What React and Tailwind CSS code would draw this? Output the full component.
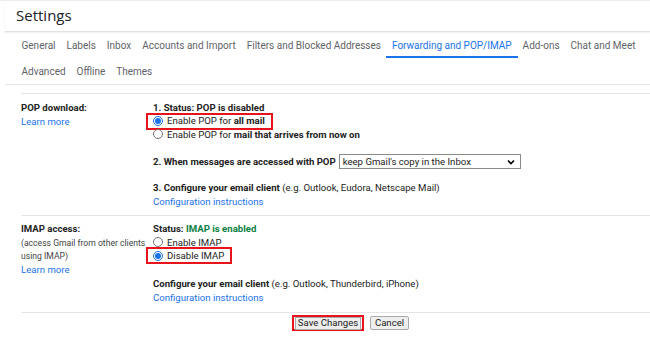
import React from "react";

const Radio = ({ checked }) => (
  <span
    className={
      "inline-flex items-center justify-center w-[10px] h-[10px] rounded-full border mr-[4px] shrink-0 " +
      (checked ? "border-[#1a73e8]" : "border-[#767676]")
    }
  >
    {checked && <span className="w-[6px] h-[6px] rounded-full bg-[#1a73e8]" />}
  </span>
);

export default function App() {
  const tabs1 = [
    "General",
    "Labels",
    "Inbox",
    "Accounts and Import",
    "Filters and Blocked Addresses",
    "Forwarding and POP/IMAP",
    "Add-ons",
    "Chat and Meet",
  ];
  const tabs2 = ["Advanced", "Offline", "Themes"];
  return (
    <div className="w-[650px] h-[345px] bg-white overflow-hidden text-[#222] font-['Roboto',sans-serif] text-[9.6px]">
      <div className="h-px bg-[#eee]" />
      <div className="h-[31px] flex items-center pl-[11px] ml-[5px] border-b border-[#e2e2e2] shadow-[0_1px_2px_rgba(0,0,0,0.08)]">
        <span className="text-[15px] leading-none text-[#202124] font-['Open_Sans',sans-serif] -mt-[2px]">Settings</span>
      </div>
      <div className="ml-[5px] border-b border-[#e5e5e5] font-['Roboto',sans-serif] text-[#5f6368] whitespace-nowrap">
        <div className="flex pl-[11px] h-[26px] items-stretch">
          {tabs1.map((t) => {
            const active = t === "Forwarding and POP/IMAP";
            return (
              <div
                key={t}
                className={
                  "flex items-center pt-[3px] border-b-2 " +
                  (active ? "text-[#1a73e8] border-[#1a73e8] px-[6px] mx-[-0.5px]" : "border-transparent px-[5.5px]")
                }
              >
                <span className="text-[10px]">{t}</span>
              </div>
            );
          })}
        </div>
        <div className="flex pl-[11px] h-[26px] items-center pt-[2px]">
          {tabs2.map((t) => (
            <div key={t} className="px-[5.5px]">
              <span className="text-[10px]">{t}</span>
            </div>
          ))}
        </div>
      </div>

      <div className="ml-[21px] mt-[8px]">
        <div className="border-t border-[#e6e6e6] flex pt-[7px] pb-[7px]">
          <div className="w-[132px] leading-[14px]">
            <div className="font-bold">POP download:</div>
            <div className="text-[#1a73e8]">Learn more</div>
          </div>
          <div className="leading-[13.5px]">
            <div className="font-bold">1. Status: POP is disabled</div>
            <div className="flex items-center">
              <div className="flex items-center border-2 border-[#e8141b] -ml-[7px] pl-[5px] pr-[6px] h-[17px] -my-[2px]">
                <Radio checked />
                <span>
                  Enable POP for <b>all mail</b>
                </span>
              </div>
            </div>
            <div className="flex items-center">
              <Radio />
              <span>
                Enable POP for <b>mail that arrives from now on</b>
              </span>
            </div>
            <div className="flex items-center mt-[13px]">
              <span className="font-bold mr-[3px]">2. When messages are accessed with POP</span>
              <div className="w-[182px] h-[15px] border border-[#8a8a8a] flex items-center justify-between pl-[3px] pr-[5px] text-[#222]">
                <span>keep Gmail's copy in the Inbox</span>
                <svg width="8" height="6" viewBox="0 0 8 6">
                  <path d="M1 1.5 L4 4.5 L7 1.5" fill="none" stroke="#000" strokeWidth="1.6" />
                </svg>
              </div>
            </div>
            <div className="mt-[12px]">
              <b>3. Configure your email client</b> (e.g. Outlook, Eudora, Netscape Mail)
            </div>
            <div className="text-[#1a73e8]">Configuration instructions</div>
          </div>
        </div>

        <div className="border-t border-[#e6e6e6] flex pt-[6px] pb-[8px]">
          <div className="w-[132px] leading-[14px]">
            <div className="font-bold">IMAP access:</div>
            <div className="text-[8.6px] text-[#444] leading-[13px] mt-[1px] whitespace-nowrap">(access Gmail from other clients</div>
            <div className="text-[8.6px] text-[#444] leading-[13px]">using IMAP)</div>
            <div className="text-[#1a73e8]">Learn more</div>
          </div>
          <div className="leading-[13.5px]">
            <div className="font-bold">
              Status: <span className="text-[#0b8043]">IMAP is enabled</span>
            </div>
            <div className="flex items-center">
              <Radio />
              <span>Enable IMAP</span>
            </div>
            <div className="flex items-center">
              <div className="flex items-center border-2 border-[#e8141b] -ml-[7px] pl-[5px] pr-[6px] h-[17px] -my-[2px]">
                <Radio checked />
                <span>Disable IMAP</span>
              </div>
            </div>
            <div className="mt-[15px]">
              <b>Configure your email client</b> (e.g. Outlook, Thunderbird, iPhone)
            </div>
            <div className="text-[#1a73e8]">Configuration instructions</div>
          </div>
        </div>

        <div className="border-t border-[#e6e6e6] flex pt-[2px] pl-[271px] gap-[6px]">
          <button className="border-2 border-[#e8141b] h-[16px] w-[72px] flex items-center justify-center">
            <span className="bg-[#efefef] border border-[#aaa] w-[66px] h-[13px] flex items-center justify-center text-[9.6px]">Save Changes</span>
          </button>
          <button className="bg-[#efefef] border border-[#aaa] rounded-[2px] h-[14px] mt-[1px] w-[39px] text-[9.6px] flex items-center justify-center">
            Cancel
          </button>
        </div>
      </div>
    </div>
  );
}
